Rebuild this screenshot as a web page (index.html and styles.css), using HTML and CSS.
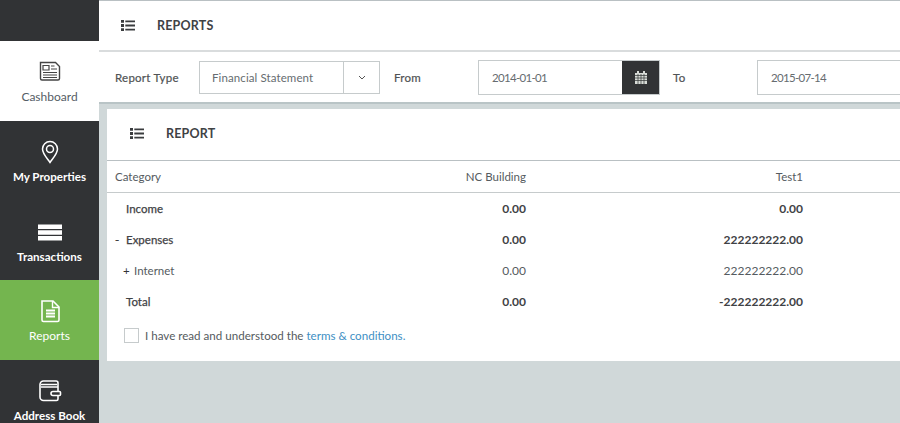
FILE: index.html
```html
<!DOCTYPE html>
<html lang="en">
<head>
<meta charset="utf-8">
<title>Reports</title>
<link rel="stylesheet" href="styles.css">
</head>
<body>
<div class="app">
  <nav class="sidebar">
    <div class="brand"></div>
    <a class="nav-item light">
      <svg class="nav-icon" viewBox="0 0 24 24" fill="none" stroke="currentColor"><path d="M2.500 3.500h15l4 4v12a1.500 1.500 0 0 1-1.500 1.500H4a1.500 1.500 0 0 1-1.500-1.500z" stroke-width="1.400"/><path d="M5 6.500h6v4.500H5z" stroke-width="1.200"/><path d="M13 7h3.500M13 10h6M5 13.500h14M5 16h14M5 18.500h14" stroke-width="1.100"/></svg>
      <span>Cashboard</span>
    </a>
    <a class="nav-item">
      <svg class="nav-icon" viewBox="0 0 24 24" fill="none" stroke="currentColor" stroke-width="1.500"><path d="M12 22.500C8.500 17.500 4.500 13.500 4.500 9a7.500 7.500 0 0 1 15 0c0 4.500-4 8.500-7.500 13.500z"/><circle cx="12" cy="9" r="3.500"/></svg>
      <span>My Properties</span>
    </a>
    <a class="nav-item nav-short">
      <svg class="nav-icon" viewBox="0 0 24 24" fill="currentColor"><path d="M0 3.500h24v4.400H0zM0 9.300h24v4.400H0zM0 15.100h24v4.400H0z"/></svg>
      <span>Transactions</span>
    </a>
    <a class="nav-item active">
      <svg class="nav-icon" viewBox="0 0 24 24" fill="none" stroke="currentColor"><path d="M4 2h11l6 6v13a1.500 1.500 0 0 1-1.500 1.500h-14A1.500 1.500 0 0 1 4 21z" stroke-width="1.600"/><path d="M14.500 2v6.500H21" stroke-width="1.400"/><path d="M8 11.500h9M8 14.500h9M8 17.500h9" stroke-width="1.800"/></svg>
      <span>Reports</span>
    </a>
    <a class="nav-item nav-last">
      <svg class="nav-icon" viewBox="0 0 24 24" fill="none" stroke="currentColor" stroke-width="1.600"><path d="M2 6.500A3.500 3.500 0 0 1 5.500 3H18a2 2 0 0 1 2 2v16a1.500 1.500 0 0 1-1.500 1.500h-13A3.500 3.500 0 0 1 2 19z"/><path d="M3 6.500h16M3 9h17"/><path d="M15 13.500h6.500a1 1 0 0 1 1 1v2a1 1 0 0 1-1 1H15a2 2 0 0 1 0-4z" fill="#313335"/></svg>
      <span>Address Book</span>
    </a>
  </nav>
  <main class="main">
    <header class="page-header">
      <svg class="list-icon" viewBox="0 0 14 11"><path d="M0 0h3v2.800H0zM0 4.100h3v2.800H0zM0 8.200h3v2.800H0zM4.300 .5h9.700v1.800H4.300zM4.300 4.600h9.700v1.800H4.300zM4.300 8.700h9.700v1.800H4.300z"/></svg>
      <h1>REPORTS</h1>
    </header>
    <section class="filters">
      <label class="lbl-type">Report Type</label>
      <div class="select">
        <span class="select-value">Financial Statement</span>
        <span class="select-arrow"><svg viewBox="0 0 8 5" fill="none" stroke="#555" stroke-width="1"><path d="M1 1l3 3 3-3"/></svg></span>
      </div>
      <label class="lbl-from">From</label>
      <div class="date">
        <span class="date-value">2014-01-01</span>
        <span class="date-btn"><svg viewBox="0 0 12 13"><path fill="#d8dcd8" d="M0 2h12v11H0z"/><path fill="#d8dcd8" d="M2 0h2v2H2zM8 0h2v2H8z"/><path stroke="#313335" stroke-width=".7" d="M0 4.500h12M0 7h12M0 9.500h12M3 3v10M6 3v10M9 3v10"/></svg></span>
      </div>
      <label class="lbl-to">To</label>
      <div class="date date-open"><span class="date-value">2015-07-14</span></div>
    </section>
    <section class="card">
      <div class="card-header">
        <svg class="list-icon" viewBox="0 0 14 11"><path d="M0 0h3v2.800H0zM0 4.100h3v2.800H0zM0 8.200h3v2.800H0zM4.300 .5h9.700v1.800H4.300zM4.300 4.600h9.700v1.800H4.300zM4.300 8.700h9.700v1.800H4.300z"/></svg>
        <h2>REPORT</h2>
      </div>
      <div class="row thead">
        <div class="c-cat">Category</div><div class="c-a">NC Building</div><div class="c-b">Test1</div>
      </div>
      <div class="row strong">
        <div class="c-cat indent">Income</div><div class="c-a">0.00</div><div class="c-b">0.00</div>
      </div>
      <div class="row strong">
        <div class="c-cat"><span class="toggle">-</span>Expenses</div><div class="c-a">0.00</div><div class="c-b">222222222.00</div>
      </div>
      <div class="row">
        <div class="c-cat sub"><span class="toggle plus">+</span>Internet</div><div class="c-a">0.00</div><div class="c-b">222222222.00</div>
      </div>
      <div class="row strong">
        <div class="c-cat indent">Total</div><div class="c-a">0.00</div><div class="c-b">-222222222.00</div>
      </div>
      <div class="terms">
        <span class="checkbox"></span>
        <span>I have read and understood the <a class="link">terms &amp; conditions.</a></span>
      </div>
    </section>
  </main>
</div>
</body>
</html>
```
FILE: styles.css
```css
* { box-sizing: border-box; }
html, body { margin: 0; height: 100%; overflow: hidden; }
body { font-family: "Lato", "Liberation Sans", sans-serif; font-size: 11.500px; color: #555b60; background: #d0d8d9; }
.app { display: flex; width: 900px; height: 423px; overflow: hidden; }

.sidebar { width: 99px; flex: none; background: #313335; display: flex; flex-direction: column; height: 423px; overflow: hidden; }
.brand { height: 41px; flex: none; }
.nav-item { height: 80px; flex: none; display: flex; flex-direction: column; align-items: center; padding-top: 19px; color: #fff; font-size: 11.600px; font-weight: 700; }
.nav-item span { margin-top: 6px; line-height: 14px; }
.nav-icon { width: 24px; height: 24px; display: block; }
.nav-item.light { background: #fff; color: #555d66; font-weight: 400; font-size: 12px; padding-top: 18px; }
.nav-item.light span { margin-top: 7px; }
.nav-item.light .nav-icon { color: #444; }
.nav-short { height: 79px; padding-top: 20px; }
.nav-short span { margin-top: 5px; }
.nav-item.active { background: #74b54f; font-weight: 400; font-size: 12px; }
.nav-last { height: 63px; padding-top: 18px; }
.nav-last span { margin-top: 7px; }

.main { flex: none; width: 960px; display: flex; flex-direction: column; }
.page-header { height: 52px; flex: none; background: #fff; border-top: 1px solid #b9c0c3; border-bottom: 2px solid #d9dcdd; display: flex; align-items: center; padding-left: 22px; }
.list-icon { width: 14px; height: 11px; fill: #3a3c3e; flex: none; }
h1, h2 { margin: 0; font-size: 12.500px; font-weight: 700; color: #3f4245; letter-spacing: .2px; }
.page-header h1 { margin-left: 22px; }

.filters { height: 52px; flex: none; background: #fff; display: flex; align-items: center; border-bottom: 2px solid #b9c4c6; }
.filters label { color: #505355; -webkit-text-stroke: .2px #505355; letter-spacing: .25px; }
.lbl-type { margin-left: 16px; width: 84px; }
.select { width: 181px; height: 33px; border: 1px solid #c6cbcc; display: flex; align-items: center; }
.select-value { flex: 1; padding-left: 12px; color: #666c70; letter-spacing: .1px; }
.select-arrow { width: 36px; height: 100%; border-left: 1px solid #c6cbcc; display: flex; align-items: center; justify-content: center; }
.select-arrow svg { width: 8px; height: 5px; }
.lbl-from { margin-left: 14px; width: 84px; }
.date { width: 182px; height: 35px; border: 1px solid #c6cbcc; display: flex; align-items: center; }
.date-value { flex: 1; padding-left: 13px; color: #666c70; letter-spacing: -.7px; }
.date-btn { width: 37px; height: 100%; background: #313335; display: flex; align-items: center; justify-content: center; }
.date-btn svg { width: 12px; height: 13px; }
.lbl-to { margin-left: 13px; width: 84px; }
.date-open { width: 200px; }

.card { margin-left: 8px; margin-top: 5px; width: 900px; height: 252px; background: #fff; }
.card-header { height: 52px; border-bottom: 1px solid #b9c0c3; display: flex; align-items: center; padding: 0 0 2px 23px; }
.card-header h2 { margin-left: 22px; }
.row { display: flex; height: 31px; align-items: center; padding-left: 8px; }
.row.thead { height: 32px; border-bottom: 1px solid #c6cbcc; }
.strong { color: #3f4245; -webkit-text-stroke: .25px #3f4245; }
.c-cat { width: 211px; display: flex; align-items: center; }
.c-a { width: 200px; text-align: right; }
.c-b { width: 277px; text-align: right; }
.row:not(.thead) .c-a, .row:not(.thead) .c-b { font-size: 12px; }
.strong .c-a, .strong .c-b { font-weight: 700; -webkit-text-stroke: 0; }
.indent { padding-left: 11px; }
.sub { padding-left: 8px; }
.toggle { width: 11px; color: #333; flex: none; }
.toggle.plus { width: 11px; }

.terms { display: flex; align-items: center; gap: 6px; padding-left: 17px; margin-top: 4px; height: 28px; font-size: 11.600px; }
.checkbox { width: 15px; height: 15px; border: 1px solid #c6cbcc; }
.link { color: #3e8fc4; }
```
